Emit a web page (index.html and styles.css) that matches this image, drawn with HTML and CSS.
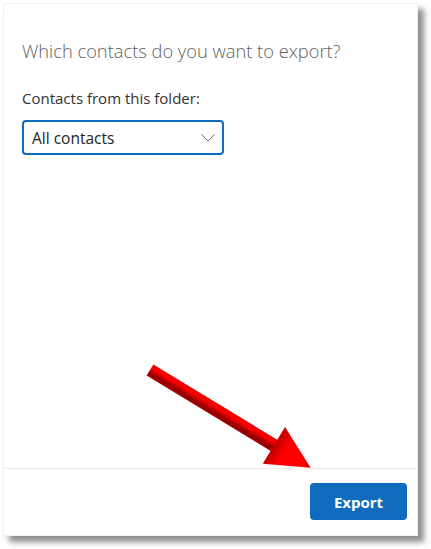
FILE: index.html
```html
<!DOCTYPE html>
<html lang="en">
<head>
<meta charset="utf-8">
<title>Export contacts</title>
<link rel="stylesheet" href="styles.css">
</head>
<body>
<div class="panel">
  <div class="content">
    <h1 class="title">Which contacts do you want to export?</h1>
    <label class="label">Contacts from this folder:</label>
    <div class="select">
      <span class="select-text">All contacts</span>
      <svg class="chevron" width="14" height="8" viewBox="0 0 14 8"><path d="M0.5 0.5 L7 7 L13.5 0.5" fill="none" stroke="#6e6e6e" stroke-width="1"/></svg>
    </div>
  </div>
  <div class="footer">
    <button class="btn-primary">Export</button>
  </div>
</div>
<svg class="annotation" width="431" height="549" viewBox="0 0 431 549">
  <defs>
    <linearGradient id="shaft" x1="0" y1="-6.5" x2="0" y2="6.5" gradientUnits="userSpaceOnUse">
      <stop offset="0" stop-color="#e80000"/>
      <stop offset="0.3" stop-color="#ff0000"/>
      <stop offset="0.75" stop-color="#8e0000"/>
      <stop offset="1" stop-color="#b00000"/>
    </linearGradient>
    <linearGradient id="head" x1="145" y1="0" x2="188" y2="0" gradientUnits="userSpaceOnUse">
      <stop offset="0" stop-color="#c00000"/>
      <stop offset="0.3" stop-color="#ff0000"/>
      <stop offset="0.8" stop-color="#ff0000"/>
      <stop offset="1" stop-color="#d00000"/>
    </linearGradient>
  </defs>
  <g transform="translate(150 370) rotate(31.3)">
    <polygon points="0,-6.5 147,-6.5 147,6.5 0,6.5" fill="url(#shaft)"/>
    <polygon points="145,-21.5 188,0 145,21.5" fill="url(#head)"/>
  </g>
</svg>
</body>
</html>
```
FILE: styles.css
```css
html, body {
  margin: 0;
  padding: 0;
  background: #ffffff;
}
body {
  width: 431px;
  height: 549px;
  position: relative;
  font-family: "Open Sans", "Noto Sans", sans-serif;
}
.panel {
  margin: 3px 0 0 3px;
  width: 413px;
  height: 531px;
  border: 1px solid #f0f0f0;
  background: #fff;
  box-shadow: 6px 6px 6px rgba(0, 0, 0, 0.45);
  display: flex;
  flex-direction: column;
}
.content {
  flex: 1;
  padding: 33px 0 0 18px;
  display: flex;
  flex-direction: column;
  align-items: flex-start;
}
.title {
  margin: 0;
  font-size: 18.3px;
  font-weight: 300;
  line-height: 28px;
  color: #616161;
}
.label {
  margin-top: 23px;
  font-size: 15px;
  line-height: 20px;
  color: #323130;
}
.select {
  margin-top: 12px;
  box-sizing: border-box;
  width: 202px;
  height: 35px;
  border: 2px solid #0f6cbd;
  border-radius: 4px;
  display: flex;
  align-items: center;
  justify-content: space-between;
  padding: 0 7px 0 8px;
}
.select-text {
  font-size: 15.5px;
  color: #242424;
}
.chevron {
  display: block;
}
.footer {
  border-top: 1px solid #edebe9;
  padding: 14px 10px 15px 0;
  display: flex;
  justify-content: flex-end;
}
.btn-primary {
  width: 97px;
  height: 37px;
  border: none;
  border-radius: 4px;
  background: #0f6cbd;
  color: #fff;
  font-family: "Open Sans", "Noto Sans", sans-serif;
  font-weight: 700;
  font-size: 15px;
  padding: 0;
}
.annotation {
  position: absolute;
  left: 0;
  top: 0;
  pointer-events: none;
}
```
